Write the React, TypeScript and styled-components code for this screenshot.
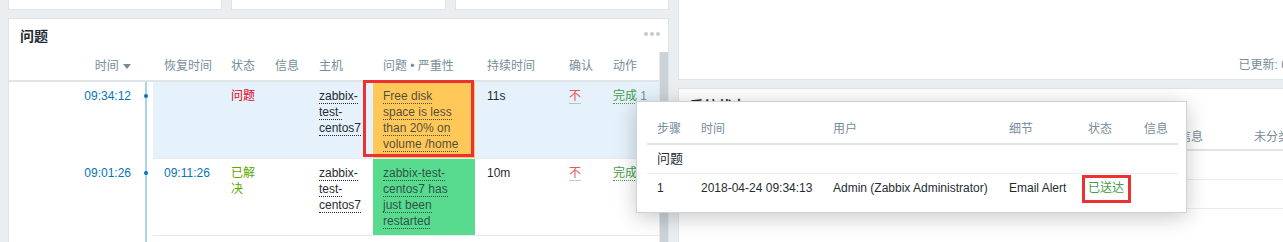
import styled, { createGlobalStyle } from "styled-components";

const GlobalStyle = createGlobalStyle`
  html, body {
    margin: 0;
    padding: 0;
  }
  body {
    background: #ebeef0;
    font-family: "Liberation Sans", "Noto Sans CJK SC", Arial, sans-serif;
    font-size: 12px;
    color: #1f2c33;
  }
`;

type Problem = {
    time: string;
    recovery: string;
    status: string;
    resolved: boolean;
    host: string;
    problem: string;
    severity: "average" | "resolved";
    duration: string;
    marked?: boolean;
};

const problems: Problem[] = [
    {
        time: "09:34:12",
        recovery: "",
        status: "问题",
        resolved: false,
        host: "zabbix-test-centos7",
        problem: "Free disk space is less than 20% on volume /home",
        severity: "average",
        duration: "11s",
        marked: true,
    },
    {
        time: "09:01:26",
        recovery: "09:11:26",
        status: "已解决",
        resolved: true,
        host: "zabbix-test-centos7",
        problem: "zabbix-test-centos7 has just been restarted",
        severity: "resolved",
        duration: "10m",
    },
];

// column widths of the three tables
const problemCols = [131, 13, 72, 44, 44, 60, 102, 87, 45, 52];
const hintCols = [44, 132, 176, 79, 56, 44];
const statusCols = [485, 75, 79];

export default function App(): JSX.Element {
    return (
        <>
            <GlobalStyle />
            <Page>
                <Column $width={660}>
                    <CardRow>
                        <Card />
                        <Card />
                        <Card />
                    </CardRow>
                    <ProblemsWidget />
                </Column>
                <Column $width={661}>
                    <UpdatedPanel>
                        <Updated>已更新: 09:34:27</Updated>
                    </UpdatedPanel>
                    <SystemStatus />
                </Column>
                <ActionsHint />
            </Page>
        </>
    );
}

const ProblemsWidget = (): JSX.Element => {
    return (
        <Widget>
            <WidgetHead>
                <Title>问题</Title>
                <Dots>
                    <i />
                    <i />
                    <i />
                </Dots>
            </WidgetHead>
            <ScrollArea>
                <ProblemTable>
                    <colgroup>
                        {problemCols.map((w, i) => (
                            <Col key={i} $w={w} />
                        ))}
                    </colgroup>
                    <thead>
                        <tr>
                            <Th $align="right" $pr={9}>
                                时间 <SortArrow />
                            </Th>
                            <Th />
                            <Th $pl={11}>恢复时间</Th>
                            <Th>状态</Th>
                            <Th>信息</Th>
                            <Th>主机</Th>
                            <Th $pl={10}>问题 • 严重性</Th>
                            <Th $pl={12}>持续时间</Th>
                            <Th $pl={7}>确认</Th>
                            <Th>动作</Th>
                        </tr>
                    </thead>
                    <tbody>
                        {problems.map((p, i) => (
                            <Row key={i} $active={!p.resolved}>
                                <TimeCell>
                                    <TimeLink>{p.time}</TimeLink>
                                </TimeCell>
                                <TimelineCell $dot />
                                <Cell $pl={11}>
                                    <TimeLink>{p.recovery}</TimeLink>
                                </Cell>
                                <Cell>
                                    <Status $resolved={p.resolved}>{p.status}</Status>
                                </Cell>
                                <Cell />
                                <Cell>
                                    <Dotted>{p.host}</Dotted>
                                </Cell>
                                <ProblemCell $severity={p.severity}>
                                    <Dotted $soft>{p.problem}</Dotted>
                                    {p.marked && <Marker />}
                                </ProblemCell>
                                <Cell $pl={12}>{p.duration}</Cell>
                                <Cell $pl={7}>
                                    <Ack>不</Ack>
                                </Cell>
                                <Cell>
                                    <Done>完成</Done> <Count>1</Count>
                                </Cell>
                            </Row>
                        ))}
                        <Row $active={false}>
                            <TimeCell />
                            <TimelineCell />
                            <FillerCell colSpan={8} />
                        </Row>
                    </tbody>
                </ProblemTable>
                <ScrollBar />
            </ScrollArea>
        </Widget>
    );
};

const SystemStatus = (): JSX.Element => {
    return (
        <Widget>
            <WidgetHead>
                <Title>系统状态</Title>
            </WidgetHead>
            <StatusBody>
                <StatusTable>
                    <colgroup>
                        {statusCols.map((w, i) => (
                            <Col key={i} $w={w} />
                        ))}
                    </colgroup>
                    <thead>
                        <tr>
                            <StatusTh />
                            <StatusTh>信息</StatusTh>
                            <StatusTh>未分类</StatusTh>
                        </tr>
                    </thead>
                    <tbody>
                        {[0, 1].map((r) => (
                            <tr key={r}>
                                <StatusTd />
                                <StatusTd />
                                <StatusTd />
                            </tr>
                        ))}
                    </tbody>
                </StatusTable>
            </StatusBody>
        </Widget>
    );
};

const ActionsHint = (): JSX.Element => {
    return (
        <Hint>
            <HintTable>
                <colgroup>
                    {hintCols.map((w, i) => (
                        <Col key={i} $w={w} />
                    ))}
                </colgroup>
                <thead>
                    <tr>
                        <HintTh>步骤</HintTh>
                        <HintTh>时间</HintTh>
                        <HintTh>用户</HintTh>
                        <HintTh>细节</HintTh>
                        <HintTh>状态</HintTh>
                        <HintTh>信息</HintTh>
                    </tr>
                </thead>
                <tbody>
                    <tr>
                        <Caption colSpan={6}>问题</Caption>
                    </tr>
                    <tr>
                        <HintTd>1</HintTd>
                        <HintTd>2018-04-24 09:34:13</HintTd>
                        <HintTd>Admin (Zabbix Administrator)</HintTd>
                        <HintTd>Email Alert</HintTd>
                        <HintTd>
                            <Delivered>已送达</Delivered>
                        </HintTd>
                        <HintTd />
                    </tr>
                </tbody>
            </HintTable>
        </Hint>
    );
};

const SortArrow = (): JSX.Element => (
    <svg width="8" height="5" viewBox="0 0 8 5" style={{ marginLeft: 1, verticalAlign: 1 }}>
        <polygon points="0,0 8,0 4,5" fill="#768d99" />
    </svg>
);

const Page = styled.div`
    position: relative;
    display: flex;
    gap: 9px;
    padding-left: 8px;
    width: 1283px;
    height: 242px;
    overflow: hidden;
    box-sizing: border-box;
`;

const Column = styled.div<{ $width: number }>`
    display: flex;
    flex-direction: column;
    gap: 8px;
    flex: 0 0 ${(p) => p.$width}px;
    min-height: 0;
`;

const CardRow = styled.div`
    display: grid;
    grid-template-columns: repeat(3, 1fr);
    gap: 9px;
    height: 10px;
    flex: none;
`;

const Card = styled.div`
    background: #fff;
    border: 1px solid #dfe4e7;
    border-top: none;
    box-sizing: border-box;
`;

const Widget = styled.div`
    display: flex;
    flex-direction: column;
    flex: 1 1 auto;
    min-height: 0;
    overflow: hidden;
    background: #fff;
    border: 1px solid #dfe4e7;
    border-bottom: none;
`;

const WidgetHead = styled.div`
    display: flex;
    align-items: center;
    justify-content: space-between;
    height: 33px;
    padding: 0 8px 0 11px;
    flex: none;
`;

const Title = styled.h4`
    margin: 0;
    font-size: 14px;
    font-weight: bold;
    line-height: 18px;
    color: #1f2c33;
`;

const Dots = styled.div`
    display: flex;
    gap: 2px;
    margin-top: -4px;

    i {
        width: 4px;
        height: 4px;
        border-radius: 50%;
        background: #c2ccd2;
    }
`;

const ScrollArea = styled.div`
    display: flex;
    flex: 1;
    min-height: 0;
`;

const ScrollBar = styled.div`
    width: 8px;
    flex: none;
    background: #cbd3d8;
    border-left: 1px solid #e3e8eb;
`;

const ProblemTable = styled.table`
    table-layout: fixed;
    width: 649px;
    border-collapse: separate;
    border-spacing: 0;
    align-self: flex-start;
`;

const Col = styled.col<{ $w: number }>`
    width: ${(p) => p.$w}px;
`;

const Th = styled.th<{ $pl?: number; $pr?: number; $align?: string }>`
    padding: 6px ${(p) => p.$pr ?? 5}px 6px ${(p) => p.$pl ?? 6}px;
    text-align: ${(p) => p.$align ?? "left"};
    font-weight: normal;
    line-height: 16px;
    color: #768d99;
    white-space: nowrap;
    border-bottom: 2px solid #dfe4e7;
`;

const Row = styled.tr<{ $active: boolean }>`
    background: ${(p) => (p.$active ? "#e5f1fb" : "#fff")};
`;

const Cell = styled.td<{ $pl?: number }>`
    padding: 6px 5px 6px ${(p) => p.$pl ?? 6}px;
    vertical-align: top;
    line-height: 16px;
    border-bottom: 1px solid #e6eaed;
`;

const FillerCell = styled.td`
    height: 40px;
    padding: 0;
`;

const TimeCell = styled.td`
    padding: 6px 9px 6px 6px;
    vertical-align: top;
    text-align: right;
    line-height: 16px;
    background: #fff;
`;

const TimelineCell = styled.td<{ $dot?: boolean }>`
    position: relative;
    padding: 0;
    background: #fff;

    &::before {
        content: "";
        position: absolute;
        left: 5px;
        top: 0;
        bottom: 0;
        width: 2px;
        background: #a9d3f0;
    }

    &::after {
        content: "";
        display: ${(p) => (p.$dot ? "block" : "none")};
        position: absolute;
        left: 4px;
        top: 12px;
        width: 4px;
        height: 4px;
        border-radius: 50%;
        background: #0275b8;
    }
`;

const ProblemCell = styled(Cell)<{ $severity: "average" | "resolved" }>`
    position: relative;
    padding: 6px 12px 6px 10px;
    background: ${(p) => (p.$severity === "average" ? "#ffc859" : "#59db8f")};
`;

const Marker = styled.span`
    position: absolute;
    top: -2px;
    left: -10px;
    right: 1px;
    bottom: 1px;
    border: 3px solid #eb3131;
    pointer-events: none;
`;

const TimeLink = styled.span`
    color: #0275b8;
`;

const Status = styled.span<{ $resolved: boolean }>`
    color: ${(p) => (p.$resolved ? "#59a700" : "#e0001b")};
`;

const Dotted = styled.span<{ $soft?: boolean }>`
    color: ${(p) => (p.$soft ? "rgba(31, 44, 51, 0.8)" : "#1f2c33")};
    border-bottom: 1px dotted currentColor;
`;

const Ack = styled.span`
    color: #e45959;
    border-bottom: 1px solid rgba(118, 141, 153, 0.45);
`;

const Done = styled.span`
    color: #429e47;
    border-bottom: 1px dotted #429e47;
`;

const Count = styled.span`
    color: #768d99;
`;

const UpdatedPanel = styled.div`
    display: flex;
    justify-content: flex-end;
    align-items: flex-end;
    height: 80px;
    flex: none;
    box-sizing: border-box;
    padding: 0 10px 6px;
    background: #fff;
    border: 1px solid #dfe4e7;
    border-top: none;
`;

const Updated = styled.span`
    color: #768d99;
    line-height: 16px;
    white-space: nowrap;
`;

const StatusBody = styled.div`
    padding: 0 10px;
`;

const StatusTable = styled.table`
    table-layout: fixed;
    width: 639px;
    border-collapse: separate;
    border-spacing: 0;
`;

const StatusTh = styled.th`
    padding: 7px 5px 4px;
    text-align: left;
    font-weight: normal;
    line-height: 16px;
    color: #768d99;
    white-space: nowrap;
    border-bottom: 2px solid #dfe4e7;
`;

const StatusTd = styled.td`
    height: 16px;
    padding: 6px 5px;
    line-height: 16px;
    border-bottom: 1px solid #ebeef0;
`;

const Hint = styled.div`
    position: absolute;
    left: 636px;
    top: 101px;
    width: 551px;
    box-sizing: border-box;
    padding: 13px 10px 10px;
    background: #fff;
    border: 1px solid #cbd3d8;
    box-shadow: 0 4px 20px rgba(0, 0, 0, 0.22);
`;

const HintTable = styled.table`
    table-layout: fixed;
    width: 531px;
    border-collapse: separate;
    border-spacing: 0;
`;

const HintTh = styled.th`
    padding: 6px 5px 6px 10px;
    text-align: left;
    font-weight: normal;
    line-height: 16px;
    color: #768d99;
    white-space: nowrap;
    border-bottom: 2px solid #dfe4e7;
`;

const Caption = styled.td`
    padding: 6px 5px 6px 10px;
    font-size: 13px;
    line-height: 16px;
    color: #1f2c33;
    border-bottom: 1px solid #ebeef0;
`;

const HintTd = styled.td`
    padding: 6px 5px 6px 10px;
    line-height: 16px;
    white-space: nowrap;
`;

const Delivered = styled.span`
    position: relative;
    display: inline-block;
    color: #429e47;

    &::after {
        content: "";
        position: absolute;
        top: -5px;
        bottom: -7px;
        left: -6px;
        right: -7px;
        border: 3px solid #eb3131;
    }
`;
